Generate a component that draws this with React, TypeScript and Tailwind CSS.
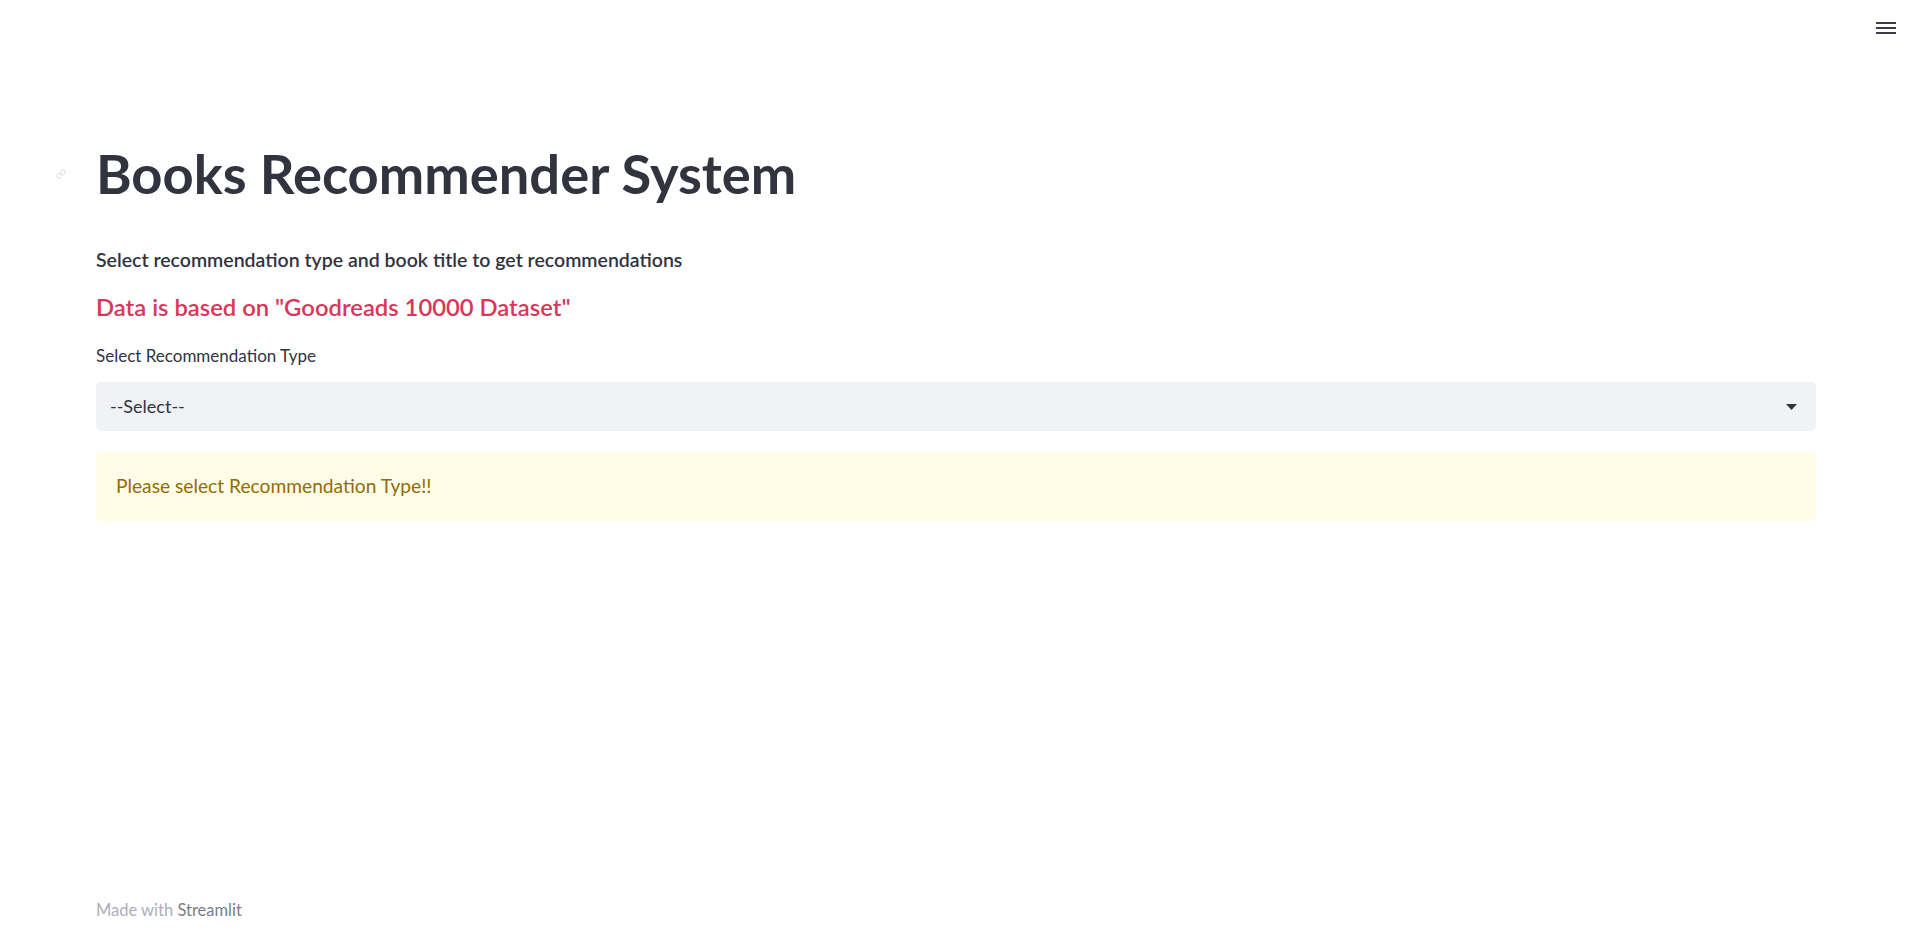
import { Link } from "lucide-react";

function MenuIcon() {
  return (
    <svg width="20" height="13" viewBox="0 0 20 13" fill="none">
      <rect x="0" y="0" width="20" height="2" fill="#3b3d49" />
      <rect x="0" y="5" width="20" height="2" fill="#3b3d49" />
      <rect x="0" y="10" width="20" height="2" fill="#3b3d49" />
    </svg>
  );
}

function Caret() {
  return (
    <svg width="11" height="6" viewBox="0 0 11 6">
      <path d="M0 0h11L5.5 6z" fill="#31333f" />
    </svg>
  );
}

export default function App() {
  return (
    <div className="h-[928px] flex flex-col bg-white font-['Lato','Liberation_Sans',sans-serif] text-[#31333f]">
      {/* Top bar */}
      <header className="flex justify-end h-[56px] pt-[22px] pr-[20px]">
        <MenuIcon />
      </header>

      <main className="flex flex-col pl-[96px] pr-[100px]">
        <div className="relative mt-[87px]">
          <Link className="absolute left-[-40px] top-[26px] w-[10px] h-[10px] text-[#cfcfd4]" strokeWidth={2} />
          <h1 className="text-[54.3px] leading-[60px] font-bold">Books Recommender System</h1>
        </div>

        <p className="mt-[43px] text-[19.5px] leading-[28px] font-semibold">
          Select recommendation type and book title to get recommendations
        </p>

        <p className="mt-[17px] text-[23.8px] leading-[32px] font-semibold text-[#d7375a]">
          Data is based on "Goodreads 10000 Dataset"
        </p>

        <label className="mt-[22px] text-[17px] leading-[22px]">Select Recommendation Type</label>

        <div className="mt-[15px] h-[49px] rounded-[5px] bg-[#f0f2f6] flex items-center justify-between pl-[14px] pr-[19px]">
          <span className="text-[18px]">--Select--</span>
          <Caret />
        </div>

        <div className="mt-[21px] h-[69px] rounded-[5px] bg-[#fffce7] flex items-center pl-[20px]">
          <span className="text-[19.2px] text-[#926c05]">Please select Recommendation Type!!</span>
        </div>
      </main>

      <footer className="mt-auto pl-[96px] pb-[8px] text-[16.5px] leading-[20px] text-[#aeadbb]">
        Made with <span className="text-[#7d7c89]">Streamlit</span>
      </footer>
    </div>
  );
}
